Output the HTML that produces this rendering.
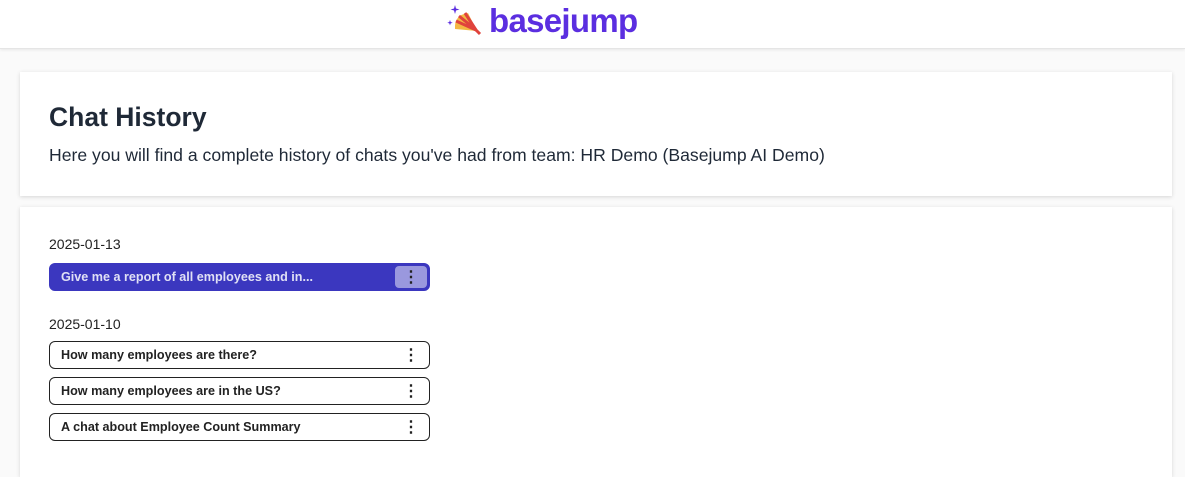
<!DOCTYPE html>
<html><head><style>
*{box-sizing:border-box;margin:0;padding:0}
body{width:1185px;height:461px;overflow:hidden;background:#fafafa;font-family:"Liberation Sans",sans-serif;color:#1f2937;position:relative}
.hdr{position:absolute;left:0;top:0;width:1185px;height:49px;background:#fff;border-bottom:1px solid #e5e5e5;box-shadow:0 1px 3px rgba(0,0,0,.08)}
.logo{position:absolute;left:489px;top:2px;font-size:33px;font-weight:bold;color:#5b2ee0;letter-spacing:-0.7px}
.card{position:absolute;left:20px;width:1152px;background:#fff;box-shadow:0 1px 4px rgba(0,0,0,.15)}
h1{position:absolute;left:29px;top:30px;font-size:26.5px;font-weight:bold;color:#1f2937}
.sub{position:absolute;left:29px;top:73px;font-size:17.6px;color:#1f2937}
.date{position:absolute;left:49px;font-size:14px;color:#222}
.item{position:absolute;left:49px;width:381px;height:28px;border:1px solid #222;border-radius:6px;background:#fff;font-size:12.6px;font-weight:bold;padding-left:11px;line-height:26px;color:#222}
.item.act{background:#3b37bf;border-color:#3b37bf;color:#e0e0f5}
.dots{position:absolute;right:2px;top:2px;width:32px;height:22px;border-radius:4px;text-align:center;font-size:16px;line-height:24px;font-weight:bold}
.act .dots{background:#9a98de;color:#222}
</style></head><body>
<div class="hdr">
<svg style="position:absolute;left:444px;top:3px" width="42" height="34" viewBox="0 0 42 34">
<path d="M11 2l1 3.5 3.5 1-3.5 1-1 3.5-1-3.5-3.5-1 3.5-1z" fill="#5b2ee0"/><path d="M6 17l.7 2 2 .7-2 .7-.7 2-.7-2-2-.7 2-.7z" fill="#5b2ee0"/>
<path d="M11 26 Q10 12 24 10 L33 28 Z" fill="#f4b844"/><path d="M12 18 L32 27 M15 13 L32 27 M21 10 L32 27" stroke="#e0433c" stroke-width="3"/>
<path d="M31 26l5 5" stroke="#e0433c" stroke-width="3"/></svg>
<div class="logo">basejump</div></div>
<div class="card" style="top:72px;height:124px"><h1>Chat History</h1><div class="sub">Here you will find a complete history of chats you've had from team: HR Demo (Basejump AI Demo)</div></div>
<div class="card" style="top:207px;height:270px"></div>
<div class="date" style="top:236px">2025-01-13</div>
<div class="item act" style="top:263px">Give me a report of all employees and in...<div class="dots">⋮</div></div>
<div class="date" style="top:316px">2025-01-10</div>
<div class="item" style="top:341px">How many employees are there?<div class="dots">⋮</div></div>
<div class="item" style="top:377px">How many employees are in the US?<div class="dots">⋮</div></div>
<div class="item" style="top:413px">A chat about Employee Count Summary<div class="dots">⋮</div></div>
</body></html>
